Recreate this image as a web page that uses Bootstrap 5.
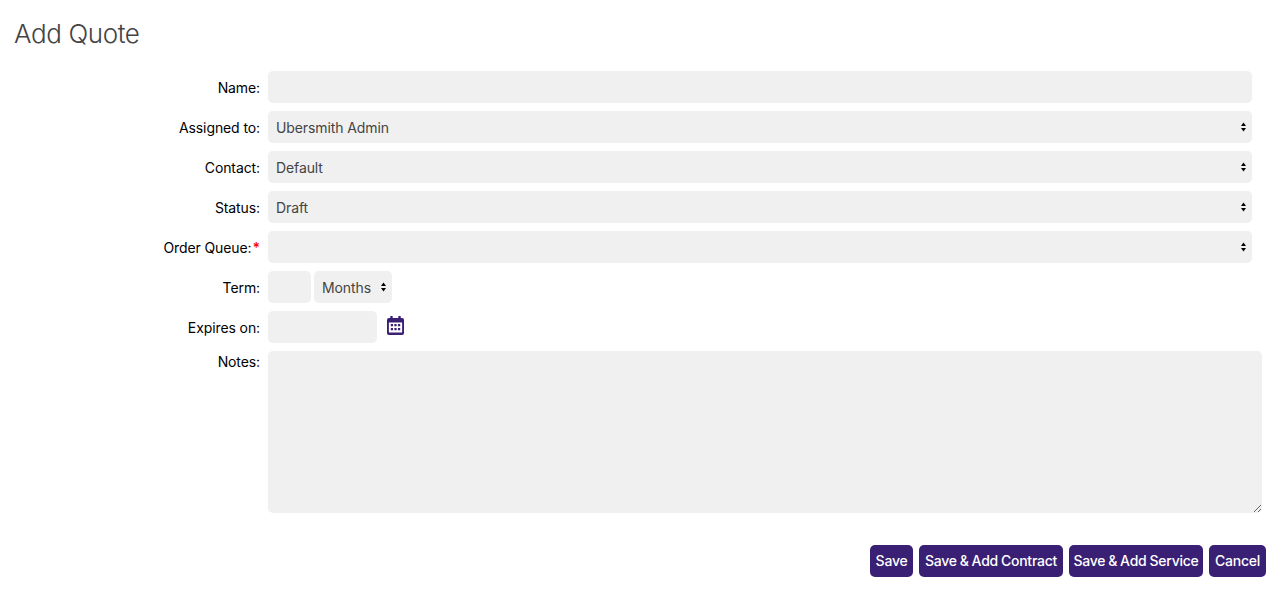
<!DOCTYPE html>
<html lang="en">
<head>
<meta charset="utf-8">
<title>Add Quote</title>
<link href="https://cdn.jsdelivr.net/npm/bootstrap@5.3.0/dist/css/bootstrap.min.css" rel="stylesheet">
<style>
body{font-family:Inter,"Open Sans",sans-serif;font-size:14px;color:#000;background:#fff;padding:18px 14px 0 0}
.page-title{font-family:Inter,sans-serif;font-size:26px;font-weight:300;line-height:32px;color:#444;margin:0 0 21px 14px;letter-spacing:-.4px}
.form-line{gap:8px;margin-bottom:8px}
.field-label{width:260px;flex:none;text-align:right;line-height:34px;height:32px;margin:0;font-size:14px;letter-spacing:-.1px}
.req{color:#f00;font-weight:600;margin-left:1px}
.field,.field:focus{background-color:#f0f0f0;border:0;border-radius:5px;height:32px;padding:0 8px;font-size:14px;color:#444;box-shadow:none;min-height:0;line-height:34px;letter-spacing:-.1px}
select.field,select.field:focus{background-image:url("data:image/svg+xml,%3Csvg xmlns='http://www.w3.org/2000/svg' width='5' height='10'%3E%3Cpath d='M2.5 .5 5 4H0zM2.500 9.500 0 6H5z' fill='%23000'/%3E%3C/svg%3E");background-size:5px 10px;background-position:right 6px center;background-repeat:no-repeat;padding-right:20px}
.wide{width:984px}
.term-num{width:43px}
.term-unit{width:78px}
.form-line .tight{gap:3px}
.date-in{width:109px}
.cal-ico{width:17px;height:19px;margin:-3px 0 0 2px;flex:none}
.notes,.notes:focus{width:994px;height:162px;line-height:1.4;padding:8px}
.notes-label{line-height:22px;height:auto}
.actions{gap:6px;margin-top:32px}
.act-btn,.act-btn:hover{background:#392074;color:#fff;border:0;border-radius:5px;height:32px;padding:0;font-size:14px;font-weight:500;line-height:32px;letter-spacing:-.25px;word-spacing:-.5px}
.btn-save{width:43px}
.btn-contract{width:144px}
.btn-service{width:134px}
.btn-cancel{width:57px}
</style>
</head>
<body>
<h1 class="page-title">Add Quote</h1>
<form>
<div class="d-flex form-line"><label class="field-label" for="f1">Name:</label><input id="f1" class="form-control field wide" type="text"></div>
<div class="d-flex form-line"><label class="field-label" for="f2">Assigned to:</label><select id="f2" class="form-select field wide"><option>Ubersmith Admin</option></select></div>
<div class="d-flex form-line"><label class="field-label" for="f3">Contact:</label><select id="f3" class="form-select field wide"><option>Default</option></select></div>
<div class="d-flex form-line"><label class="field-label" for="f4">Status:</label><select id="f4" class="form-select field wide"><option>Draft</option></select></div>
<div class="d-flex form-line"><label class="field-label" for="f5">Order Queue:<span class="req">*</span></label><select id="f5" class="form-select field wide"><option></option></select></div>
<div class="d-flex form-line"><label class="field-label" for="f6">Term:</label><div class="d-flex tight"><input id="f6" class="form-control field term-num" type="text"><select class="form-select field term-unit"><option>Months</option></select></div></div>
<div class="d-flex form-line align-items-center"><label class="field-label" for="f7">Expires on:</label><input id="f7" class="form-control field date-in" type="text">
<svg class="cal-ico" viewBox="0 0 18 19" preserveAspectRatio="none" aria-hidden="true"><path fill="#392074" d="M3.500 0h2.500v2h6V0h2.500v2H16a2 2 0 0 1 2 2v13a2 2 0 0 1-2 2H2a2 2 0 0 1-2-2V4a2 2 0 0 1 2-2h1.500z"/><path fill="#fff" d="M2 6.500h14V16a.6.6 0 0 1-.6.6H2.600A.6.6 0 0 1 2 16z"/><path fill="#392074" d="M4 8h2.400v2.200H4zM7.800 8h2.400v2.200H7.800zM11.600 8H14v2.200h-2.400zM4 12h2.400v2.200H4zM7.800 12h2.400v2.200H7.800zM11.600 12H14v2.200h-2.400z"/></svg></div>
<div class="d-flex form-line"><label class="field-label notes-label" for="f8">Notes:</label><textarea id="f8" class="form-control field notes"></textarea></div>
<div class="d-flex justify-content-end actions">
<button type="button" class="btn act-btn btn-save">Save</button>
<button type="button" class="btn act-btn btn-contract">Save &amp; Add Contract</button>
<button type="button" class="btn act-btn btn-service">Save &amp; Add Service</button>
<button type="button" class="btn act-btn btn-cancel">Cancel</button>
</div>
</form>
<script src="https://cdn.jsdelivr.net/npm/bootstrap@5.3.0/dist/js/bootstrap.bundle.min.js"></script>
</body>
</html>
